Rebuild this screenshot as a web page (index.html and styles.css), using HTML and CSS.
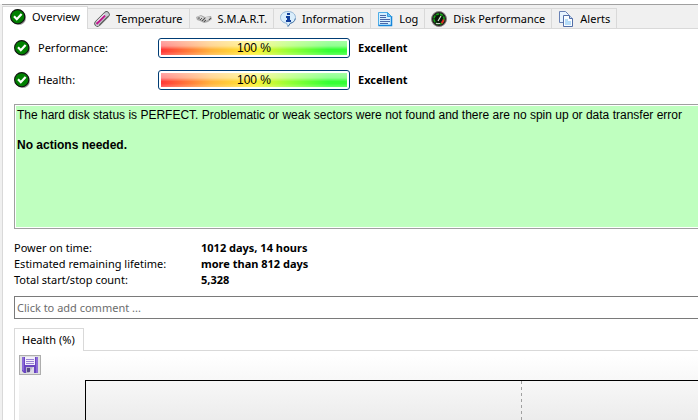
FILE: index.html
```html
<!DOCTYPE html>
<html lang="en">
<head>
    <meta charset="UTF-8">
    <meta name="viewport" content="width=device-width, initial-scale=1.0">
    <title>Disk status</title>
    <link rel="stylesheet" href="styles.css">
</head>
<body>

<svg width="0" height="0" class="defs">
    <symbol id="ok" viewBox="0 0 16 16">
        <circle cx="8.8" cy="8.8" r="7.2" fill="#999"/>
        <circle cx="7.7" cy="7.7" r="7.1" fill="#008000" stroke="#111" stroke-width="1.1"/>
        <path d="M4 7.2l2.8 3L11.6 5" fill="none" stroke="#fff" stroke-width="2.2"/>
    </symbol>
</svg>

<div class="window">
    <div class="tabs" role="tablist">
        <button class="tab active" role="tab">
            <svg class="icon"><use href="#ok"/></svg>
            Overview
        </button>
        <button class="tab" role="tab">
            <svg class="icon" viewBox="0 0 16 16">
                <path d="M3.500 12.500L12.500 3.500" stroke="#555" stroke-width="6.400" stroke-linecap="round"/>
                <path d="M3.500 12.500L12.500 3.500" stroke="#c9c9d2" stroke-width="4.800" stroke-linecap="round"/>
                <path d="M5.500 14L14 5.500" stroke="#666" stroke-width="1.400"/>
                <path d="M2.500 13L11 4.500" stroke="#c0188c" stroke-width="2.200"/>
                <path d="M3 10.500L10.500 3" stroke="#fff" stroke-width="1"/>
            </svg>
            Temperature
        </button>
        <button class="tab" role="tab">
            <svg class="icon" viewBox="0 0 16 16">
                <path d="M0 6l5-2 4 2 6-1 1 3-4 3-4 1-4-2-3-1z" fill="#a9a9a9"/>
                <path d="M1 6l4-1 3 2-3 2zM10 6l4 0-2 3-3 1z" fill="#d8d8d8"/>
                <path d="M4 9l2-2M6 10l3-3M8 11l2-2M13 9l2-2M2 7h2" stroke="#555" stroke-width="1"/>
            </svg>
            S.M.A.R.T.
        </button>
        <button class="tab" role="tab">
            <svg class="icon" viewBox="0 0 16 16">
                <path d="M8 .5c4.300 0 7.500 2.500 7.500 6 0 3.200-2.300 5.200-5 5.700L8 15.500l-1.500-3.300C3 11.700.5 9.700.5 6.500.5 3 3.700.5 8 .5z" fill="#d9edfb" stroke="#92b4d4"/>
                <path d="M15.300 7.500c-.6 2.900-2.500 4.300-4.800 4.700L8 15.500" fill="none" stroke="#527ba8"/>
                <path d="M7 2h3v2H7zM6 5h4v4h1v2H6V9h1V7H6z" fill="#123f9c"/>
            </svg>
            Information
        </button>
        <button class="tab" role="tab">
            <svg class="icon" viewBox="0 0 16 16">
                <path d="M1.500 1.500h9l4 4v9h-13z" fill="#d5efff" stroke="#4eaee8"/>
                <path d="M14.500 5v9.500h-13" fill="none" stroke="#1686db" stroke-width="1.500"/>
                <path d="M10.500 1.500v4h4z" fill="#6fc5f5" stroke="#3b9fe0"/>
                <path d="M3 4.500h6M3 6.500h6M3 8.500h10M3 10.500h10M3 12.500h8" stroke="#4a67a8"/>
            </svg>
            Log
        </button>
        <button class="tab" role="tab">
            <svg class="icon" viewBox="0 0 16 16">
                <circle cx="8" cy="8" r="7.500" fill="#222" stroke="#8a8080"/>
                <circle cx="8" cy="8" r="5" fill="#0b150b" stroke="#12a612" stroke-width="1.600" stroke-dasharray="3 1"/>
                <path d="M12.500 8.500a5 5 0 0 1-2 3.600" fill="none" stroke="#e02a20" stroke-width="2"/>
                <path d="M7 10l3-5" stroke="#d8f0d8" stroke-width="1.200"/>
                <path d="M5 12.500h4" stroke="#ccc"/>
            </svg>
            Disk Performance
        </button>
        <button class="tab" role="tab">
            <svg class="icon" viewBox="0 0 16 16">
                <path d="M1.500.5h6l3 3v8h-9z" fill="#e8f4ff" stroke="#6881b5"/>
                <path d="M5.500 4.500h6l3 3v8h-9z" fill="#fafdff" stroke="#536fa8"/>
                <path d="M11.500 4.500v3h3" fill="#c8dcf4" stroke="#536fa8"/>
                <path d="M7 8h3v2h3v4H7z" fill="#b5dcf8"/>
            </svg>
            Alerts
        </button>
        <div class="tabs_rest"></div>
    </div>

    <div class="page">
        <div class="meter">
            <svg class="icon"><use href="#ok"/></svg>
            <div class="meter_name">Performance:</div>
            <div class="bar"><div class="bar_fill">100 %</div></div>
            <b>Excellent</b>
        </div>
        <div class="meter">
            <svg class="icon"><use href="#ok"/></svg>
            <div class="meter_name">Health:</div>
            <div class="bar"><div class="bar_fill">100 %</div></div>
            <b>Excellent</b>
        </div>

        <div class="status">
            The hard disk status is PERFECT. Problematic or weak sectors were not found and there are no spin up or data transfer error<br>
            <br>
            <b>No actions needed.</b>
        </div>

        <dl class="facts">
            <dt>Power on time:</dt>
            <dd>1012 days, 14 hours</dd>
            <dt>Estimated remaining lifetime:</dt>
            <dd>more than 812 days</dd>
            <dt>Total start/stop count:</dt>
            <dd>5,328</dd>
        </dl>

        <input class="comment" type="text" aria-label="Comment" placeholder="Click to add comment ...">

        <div class="chart_tabs">
            <button class="chart_tab">Health (%)</button>
            <div class="chart_tabs_rest"></div>
        </div>
        <div class="chart_panel">
            <div class="chart">
                <button class="save" aria-label="Save">
                    <svg class="icon" viewBox="0 0 16 16">
                        <path d="M0 0h16v16H2l-2-2z" fill="#6a45c0"/>
                        <path d="M0 0h2v14l-2-1zM14 0h2v16h-2z" fill="#8b6bd8"/>
                        <path d="M3 0h10v8H3z" fill="#f3effc"/>
                        <path d="M4 2.500h8M4 4.500h8M4 6.500h8" stroke="#9a84d4"/>
                        <path d="M4 10h8v6H4z" fill="#b9b4cc"/>
                        <path d="M5 11h3v4H5z" fill="#564a86"/>
                        <path d="M7 16l4-6h1v6z" fill="#dedbe8"/>
                    </svg>
                </button>
                <div class="plot">
                    <div class="plot_cell"></div>
                </div>
            </div>
        </div>
    </div>
</div>

</body>
</html>
```
FILE: styles.css
```css
*{
    box-sizing: border-box;
}
body{
    margin: 0;
    background-color: white;
    font-family: "Noto Sans", "Open Sans", sans-serif;
    font-size: 11px;
    line-height: 16px;
    color: black;
}
button{
    font: inherit;
    color: inherit;
    cursor: pointer;
}
.defs{
    position: absolute;
}
.icon{
    width: 16px;
    height: 16px;
    flex: none;
}
.window{
    display: flex;
    flex-direction: column;
    height: 100vh;
    padding-left: 2px;
    border-top: 4px solid white;
    background-color: #f0f0f0;
    overflow: hidden;
}
.tabs{
    display: flex;
    align-items: flex-end;
    height: 25px;
    flex: none;
    border-top: 1px solid #a0a0a0;
}
.tab{
    display: flex;
    align-items: center;
    gap: 6px;
    height: 21px;
    padding: 0 6px;
    border: 1px solid #d9d9d9;
    border-left: 0;
    background-color: #f0f0f0;
    white-space: nowrap;
}
.tab.active{
    height: 23px;
    padding: 0 7px 3px 7px;
    border-left: 1px solid #d9d9d9;
    border-bottom: 0;
    background-color: white;
}
.tabs_rest{
    flex: 1;
    border-bottom: 1px solid #d9d9d9;
}
.page{
    display: flex;
    flex-direction: column;
    flex: 1;
    padding: 9px 0 0 11px;
    border-left: 1px solid #d9d9d9;
    background-color: white;
}
.meter{
    display: flex;
    align-items: center;
    height: 20px;
    margin-bottom: 12px;
}
.meter_name{
    width: 120px;
    margin-left: 8px;
}
.bar{
    width: 192px;
    height: 20px;
    margin-right: 8px;
    padding: 2px;
    border: 1px solid #003c74;
    border-radius: 3px;
}
.bar_fill{
    height: 14px;
    background-image: linear-gradient(to bottom, rgba(255,255,255,0.6), rgba(255,255,255,0.5) 35%, rgba(255,255,255,0.1) 60%, rgba(255,255,255,0.1) 75%, rgba(255,255,255,0.3)), linear-gradient(to right, #ff2020, #ffac28 27%, #fff01f 50%, #8fff1f 68%, #1fff1f 90%);
    font-family: "Liberation Sans", Arial, sans-serif;
    font-size: 12px;
    line-height: 14px;
    text-align: center;
}
.status{
    height: 125px;
    margin-top: 2px;
    padding: 3px 2px;
    border: 1px solid #a0a0a0;
    border-right: 0;
    box-shadow: inset 1px 1px white, inset 0 -1px white;
    background-color: #bfffbf;
    font-family: "Liberation Sans", Arial, sans-serif;
    font-size: 12px;
    line-height: 15px;
    white-space: nowrap;
    overflow: hidden;
}
.facts{
    display: grid;
    grid-template-columns: 187px 1fr;
    margin: 11px 0 8px 0;
}
.facts dd{
    margin: 0;
    font-weight: bold;
}
.comment{
    height: 23px;
    padding: 0 2px;
    border: 1px solid #7a7a7a;
    border-right: 0;
    font: inherit;
}
.comment::placeholder{
    color: #6d6d6d;
}
.chart_tabs{
    display: flex;
    margin-top: 9px;
}
.chart_tab{
    height: 23px;
    padding: 0 8px 0 7px;
    border: 1px solid #d9d9d9;
    border-bottom: 0;
    background-color: white;
}
.chart_tabs_rest{
    flex: 1;
    border-bottom: 1px solid #d9d9d9;
}
.chart_panel{
    display: flex;
    flex: 1;
    padding: 4px 0 0 4px;
    border-left: 1px solid #d9d9d9;
}
.chart{
    display: flex;
    align-items: flex-start;
    flex: 1;
    background-image: linear-gradient(to bottom, white, #ececec);
}
.save{
    display: flex;
    align-items: center;
    justify-content: center;
    width: 22px;
    height: 20px;
    padding: 0;
    border: 1px solid #adadad;
    background-color: #e1e1e1;
}
.plot{
    align-self: stretch;
    flex: 1;
    margin: 25px 0 0 44px;
    border-top: 1px solid black;
    border-left: 1px solid black;
}
/* dashed grid line, 3px on / 3px off */
.plot_cell{
    width: 436px;
    height: 100%;
    background: repeating-linear-gradient(to bottom, #a0a0a0 0 3px, transparent 3px 6px) right / 1px 100% no-repeat;
}
```
